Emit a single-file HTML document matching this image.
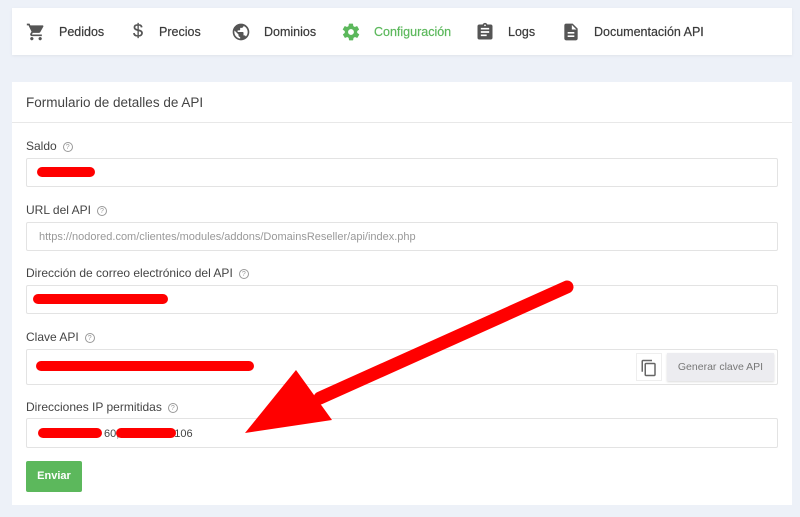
<!DOCTYPE html>
<html><head><meta charset="utf-8"><style>
*{box-sizing:border-box;margin:0;padding:0}
body{width:800px;height:517px;background:#edf1f8;font-family:"Liberation Sans",sans-serif;position:relative;overflow:hidden;color:#333}
.nav{position:absolute;left:12px;top:8px;width:780px;height:47px;background:#fff;box-shadow:0 1px 3px rgba(0,0,0,.06)}
.ni{position:absolute;top:0;height:47px;display:flex;align-items:center;font-size:12.5px;color:#3a3a3a;-webkit-text-stroke:0.2px #3a3a3a}
.ni svg{margin-right:13px}
.panel{position:absolute;left:12px;top:82px;width:780px;height:423px;background:#fff}
.ph{height:41px;border-bottom:1px solid #e8e8e8;padding:13px 0 0 14px;font-size:13.5px;color:#444}
.lbl{position:absolute;left:26px;font-size:12px;color:#444}
.lbl i{display:inline-block;width:10px;height:10px;border:1px solid #999;border-radius:50%;font-size:7px;font-style:normal;text-align:center;line-height:9px;color:#999;margin-left:6px;vertical-align:1px}
.in{position:absolute;left:26px;width:752px;border:1px solid #e3e3e3;border-radius:2px;background:#fff;font-size:11px;color:#999}
.red{position:absolute;height:10px;background:#f00;border-radius:5px}
</style></head><body>
<div class="nav">
<div class="ni" style="left:14px"><svg width="20" height="20" viewBox="0 0 24 24"><path fill="#555" d="M7 18c-1.1 0-2 .9-2 2s.9 2 2 2 2-.9 2-2-.9-2-2-2zM1 2v2h2l3.6 7.6-1.4 2.4c-.1.3-.2.6-.2 1 0 1.1.9 2 2 2h12v-2H7.4c-.1 0-.2-.1-.2-.2v-.1l.9-1.7h7.4c.8 0 1.4-.4 1.7-1l3.6-6.5c.1-.2.1-.3.1-.5 0-.6-.4-1-1-1H5.2l-.9-2H1zm16 16c-1.1 0-2 .9-2 2s.9 2 2 2 2-.9 2-2-.9-2-2-2z"/></svg>Pedidos</div>
<div class="ni" style="left:121px"><span style="font-size:18px;color:#555;margin-right:16px">$</span>Precios</div>
<div class="ni" style="left:219px"><svg width="20" height="20" viewBox="0 0 24 24"><path fill="#555" d="M12 2C6.5 2 2 6.5 2 12s4.5 10 10 10 10-4.5 10-10S17.5 2 12 2zm-1 17.9C7.1 19.4 4 16.1 4 12c0-.6.1-1.2.2-1.8L9 15v1c0 1.1.9 2 2 2v1.9zm6.9-2.5c-.3-.8-1-1.4-1.9-1.4h-1v-3c0-.6-.4-1-1-1H8v-2h2c.6 0 1-.4 1-1V7h2c1.1 0 2-.9 2-2v-.4c2.9 1.2 5 4.1 5 7.4 0 2.1-.8 4-2.1 5.4z"/></svg>Dominios</div>
<div class="ni" style="left:329px;color:#5cb85c;-webkit-text-stroke:0.2px #5cb85c"><svg width="20" height="20" viewBox="0 0 24 24"><path fill="#5cb85c" d="M19.4 13c0-.3.1-.6.1-1s0-.7-.1-1l2.1-1.7c.2-.2.2-.4.1-.6l-2-3.5c-.1-.2-.4-.3-.6-.2l-2.5 1c-.5-.4-1.1-.7-1.7-1l-.4-2.6c0-.2-.2-.4-.5-.4h-4c-.2 0-.4.2-.5.4l-.4 2.6c-.6.3-1.2.6-1.700 1l-2.5-1c-.2-.1-.5 0-.6.2l-2 3.5c-.1.2-.1.5.1.6L4.6 11c0 .3-.1.6-.1 1s0 .7.1 1l-2.1 1.7c-.2.2-.2.4-.1.6l2 3.5c.1.2.4.3.6.2l2.5-1c.5.4 1.1.7 1.7 1l.4 2.6c0 .2.2.4.5.4h4c.2 0 .4-.2.5-.4l.4-2.6c.6-.3 1.2-.6 1.7-1l2.5 1c.2.1.5 0 .6-.2l2-3.5c.1-.2.1-.5-.1-.6L19.4 13zM12 15.5c-1.9 0-3.5-1.6-3.5-3.5s1.6-3.5 3.5-3.5 3.5 1.6 3.5 3.5-1.6 3.5-3.5 3.5z"/></svg>Configuración</div>
<div class="ni" style="left:463px"><svg width="20" height="20" viewBox="0 0 24 24"><path fill="#555" d="M19 3h-4.2C14.4 1.8 13.3 1 12 1s-2.4.8-2.8 2H5c-1.1 0-2 .9-2 2v14c0 1.1.9 2 2 2h14c1.1 0 2-.9 2-2V5c0-1.1-.9-2-2-2zm-7 0c.6 0 1 .4 1 1s-.4 1-1 1-1-.4-1-1 .4-1 1-1zm2 14H7v-2h7v2zm3-4H7v-2h10v2zm0-4H7V7h10v2z"/></svg>Logs</div>
<div class="ni" style="left:549px"><svg width="20" height="20" viewBox="0 0 24 24"><path fill="#555" d="M14 2H6c-1.1 0-2 .9-2 2v16c0 1.1.9 2 2 2h12c1.1 0 2-.9 2-2V8l-6-6zm2 16H8v-2h8v2zm0-4H8v-2h8v2zm-3-5V3.5L18.5 9H13z"/></svg>Documentación API</div>
</div>
<div class="panel"><div class="ph">Formulario de detalles de API</div></div>
<div class="lbl" style="top:139px">Saldo<i>?</i></div>
<div class="in" style="top:158px;height:29px"></div>
<div class="red" style="left:37px;top:167px;width:58px"></div>
<div class="lbl" style="top:203px">URL del API<i>?</i></div>
<div class="in" style="top:222px;height:29px;padding:8px 0 0 12px">https://nodored.com/clientes/modules/addons/DomainsReseller/api/index.php</div>
<div class="lbl" style="top:266px">Dirección de correo electrónico del API<i>?</i></div>
<div class="in" style="top:285px;height:29px"></div>
<div class="red" style="left:33px;top:294px;width:135px"></div>
<div class="lbl" style="top:330px">Clave API<i>?</i></div>
<div class="in" style="top:349px;height:36px"></div>
<div class="red" style="left:36px;top:361px;width:218px"></div>
<div style="position:absolute;left:636px;top:353px;width:26px;height:28px;border:1px solid #eee;background:#fff"><svg width="18" height="20" viewBox="0 0 24 24" style="margin:4px 0 0 3px"><path fill="#666" d="M16 1H4c-1.1 0-2 .9-2 2v14h2V3h12V1zm3 4H8c-1.1 0-2 .9-2 2v14c0 1.1.9 2 2 2h11c1.1 0 2-.9 2-2V7c0-1.1-.9-2-2-2zm0 16H8V7h11v14z"/></svg></div>
<div style="position:absolute;left:667px;top:353px;width:107px;height:28px;background:#ececf0;box-shadow:0 1px 2px rgba(0,0,0,.15);font-size:10.5px;color:#777;text-align:center;line-height:28px">Generar clave API</div>
<div class="lbl" style="top:400px">Direcciones IP permitidas<i>?</i></div>
<div class="in" style="top:418px;height:30px;padding:9px 0 0 77px;color:#444;font-size:11px">60,<span style="margin-left:55px">106</span></div>
<div class="red" style="left:38px;top:428px;width:64px"></div>
<div class="red" style="left:116px;top:428px;width:60px"></div>
<div style="position:absolute;left:26px;top:461px;width:56px;height:31px;background:#5cb85c;color:#fff;font-size:11px;font-weight:bold;text-align:center;line-height:31px;border-radius:2px">Enviar</div>
<svg style="position:absolute;left:0;top:0" width="800" height="517"><path d="M567 287 L320 398" stroke="#f00" stroke-width="13" stroke-linecap="round"/><polygon points="245,433 296,370 332,420" fill="#f00"/></svg>
</body></html>
